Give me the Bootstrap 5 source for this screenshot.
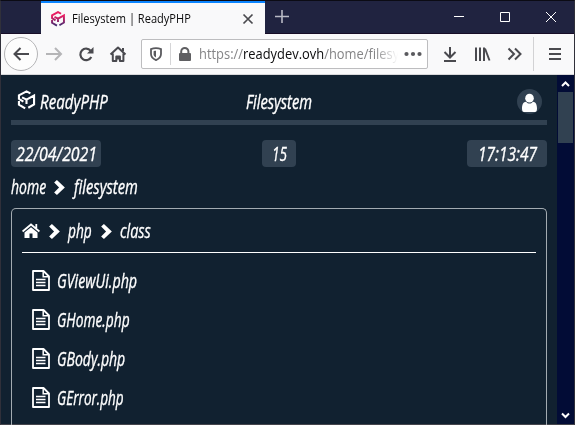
<!DOCTYPE html>
<html lang="en">
<head>
<meta charset="utf-8">
<meta name="viewport" content="width=device-width, initial-scale=1">
<title>Filesystem | ReadyPHP</title>
<link href="https://cdn.jsdelivr.net/npm/bootstrap@5.3.0/dist/css/bootstrap.min.css" rel="stylesheet">
<style>
html,body{height:100%;overflow:hidden}
body{background:#112130;font-family:"Open Sans","Noto Sans",sans-serif}
svg{display:block;flex:none}
.window{width:575px;height:425px;border:1px solid #30303a;border-top-color:#0b0b14;border-bottom-color:#45454c}
.titlebar{height:33px;background:#202340;border-bottom:1px solid #170d27}
.tab{width:224px;height:33px;margin-left:40px;background:#f9f9fa;border-top:2px solid #0a84ff;padding:0 11px 0 10px;color:#0c0c0d;font-size:12px}
.tab-icon{margin-top:1px}
.tab-title{margin-left:7px}
.toolbar{height:41px;background:#f9f9fa;border-bottom:1px solid #d8d8da;color:#4a4a4f}
.back{width:34px;height:34px;border:1px solid #b5b5b7;background:#fdfdfd;margin-left:3px}
.urlbar{width:287px;height:30px;margin-left:13px;border:1px solid #bdbdbf;border-radius:2px;background:#fff;font-size:14px}
.address{width:201px;margin-left:7px;line-height:28px;color:#858587;-webkit-mask-image:linear-gradient(90deg,#000 176px,transparent 199px);mask-image:linear-gradient(90deg,#000 176px,transparent 199px)}
.address b{font-weight:400;color:#0c0c0d}
.page{height:349px;color:#fff}
.content{width:556px;padding:0 10px;background:#112130}
.hand{font-size:20px;font-style:italic;font-weight:500;line-height:28px;height:28px;display:block;white-space:nowrap;flex:none;-webkit-text-stroke:.35px #fff}
.hand>span{display:inline-block}
.site-head{height:50px;padding:13px 5px 0 6px;border-bottom:5px solid #314151}
.site-head>*{height:28px}
.head-title{margin-right:68px}
.avatar{width:25px;height:25px;background:#314151;margin-top:1px}
.logo{margin:2px 4px 0 0}
.pills{margin-top:15px}
.pill{height:27px;background:#314151;border-radius:4px}
.pill .hand{height:27px;line-height:28px}
.pill-date{width:90px}.pill-count{width:34px;margin-right:10px}.pill-time{width:80px}
.crumbs{height:28px;margin-top:6px}
.crumb-sep{margin:0 9px 0 8px}
.panel{height:217px;margin-top:7px;border:1px solid #a3abb1;border-bottom:0;border-radius:5px 5px 0 0;padding:0 10px}
.panel-head{height:44px;padding-top:8px;padding-bottom:7px;border-bottom:1px solid #fff}
.chev-a{margin:0 8px 0 9px}
.files{padding:8px 0 0 10px}
.file{height:39px}
.file-name{margin-left:7px}
.scroll{width:17px;background:#020c36}
.thumb{width:15px;height:51px;background:#314151}
.arrow{height:17px}
</style>
<script src="https://cdn.jsdelivr.net/npm/bootstrap@5.3.0/dist/js/bootstrap.bundle.min.js"></script>
</head>
<body>
<svg width="0" height="0" class="position-absolute">
<defs>
<symbol id="cube" viewBox="0 0 16 18"><path d="M1.200 8.600V4.800L8 1.200l3.500 1.900M14.800 8.300V5L8 8.700 4 6.600M8 8.700v3.800M1.200 10v3.200L6.800 16.500M1.200 8l4 2.500M14.800 8v5L9.600 16" fill="none" stroke="currentColor" stroke-width="1.900"/></symbol>
<symbol id="chev" viewBox="0 0 10 14"><path d="M0 2.400 2.600 0 10 7 2.600 14 0 11.600 4.600 7z" fill="currentColor"/></symbol>
<symbol id="doc" viewBox="0 0 18 21"><path d="M1 1h10.500L17 6.500V20H1z" fill="none" stroke="currentColor" stroke-width="1.800" stroke-linejoin="round"/><path d="M11.200 1v5.800H17M4 9.500h9.500M4 12.500h9.500M4 15.500h9.500" fill="none" stroke="currentColor" stroke-width="1.500"/></symbol>
</defs>
</svg>
<div class="window d-flex flex-column">
  <div class="titlebar d-flex flex-shrink-0">
    <div class="tab d-flex align-items-center flex-shrink-0">
      <svg class="tab-icon" width="14" height="16" viewBox="0 0 16 18" preserveAspectRatio="none"><defs><linearGradient id="g" x1="0" y1="0" x2="0" y2="18" gradientUnits="userSpaceOnUse"><stop offset=".3" stop-color="#e91e63"/><stop offset="1" stop-color="#2b2f74"/></linearGradient></defs><path d="M1.200 8.600V4.800L8 1.200l3.500 1.900M14.800 8.300V5L8 8.700 4 6.600M8 8.700v3.800M1.200 10v3.200L6.800 16.500M1.200 8l4 2.500M14.800 8v5L9.600 16" fill="none" stroke="url(#g)" stroke-width="2.200"/></svg>
      <span class="tab-title d-block text-nowrap" data-w="119"><span class="d-inline-block">Filesystem | ReadyPHP</span></span>
      <svg class="ms-auto" width="12" height="12" viewBox="0 0 12 12"><path d="m1.500 1.500 9 9m0-9-9 9" stroke="#4a4a4f" stroke-width="1.700"/></svg>
    </div>
    <svg width="309" height="32" viewBox="265 1 309 32"><path d="M275 16.500h14M282 10v13" stroke="#b9bac5" stroke-width="1.600"/><path d="M454 16.500h10M500.500 12.500h9v9h-9zM546 12l10 10M556 12l-10 10" fill="none" stroke="#fff" stroke-width="1"/></svg>
  </div>
  <div class="toolbar d-flex align-items-center flex-shrink-0">
    <div class="back rounded-circle d-flex align-items-center justify-content-center"><svg width="16" height="14" viewBox="0 0 16 14"><path d="M16 7H1.500M7.500 1l-6 6 6 6" fill="none" stroke="currentColor" stroke-width="2"/></svg></div>
    <svg width="90" height="40" viewBox="38 34 90 40"><path d="M46 54h14.500M55 48l6 6-6 6" fill="none" stroke="#b5b5b7" stroke-width="2"/><path d="M90.600 50.600A5.800 5.800 0 1 0 91.300 57" fill="none" stroke="currentColor" stroke-width="2.200"/><path d="M93.500 47v6.500H87z" fill="currentColor"/><path d="m110.500 54.500 7.500-7 7.500 7M112.800 53.500v7.500h3.500v-4.500h3.600v4.500h3.500v-7.500M123 51v-3" fill="none" stroke="currentColor" stroke-width="2" stroke-linejoin="round"/><path d="M117 56.500h2.500v3H117z" fill="currentColor"/></svg>
    <div class="urlbar d-flex align-items-center">
      <svg width="50" height="28" viewBox="142 40 50 28"><path d="M156 48.200c2 0 3.500.3 5 .9v5c0 3-2.200 4.900-5 6-2.800-1.100-5-3-5-6v-5c1.500-.6 3-.9 5-.9z" fill="none" stroke="#5a5a5e" stroke-width="1.800"/><path d="M156 50.800c-1 0-1.700.1-2.400.4v3c0 1.500 1 2.500 2.400 3.200z" fill="#5a5a5e"/><path d="M170.500 43v22" stroke="#d5d5d7"/><path d="M181.200 54v-2.500a3.600 3.600 0 0 1 7.200 0V54" fill="none" stroke="#5f5f62" stroke-width="2"/><rect x="179" y="53" width="12" height="8" rx="1" fill="#5f5f62"/></svg>
      <div class="address text-nowrap"><span class="d-block" data-w="200"><span class="d-inline-block">https://<b>readydev.ovh</b>/home/filesy</span></span></div>
      <svg class="ms-1" width="18" height="6" viewBox="0 0 18 6"><g fill="#5a5a5e"><circle cx="2.500" cy="3" r="2.100"/><circle cx="9" cy="3" r="2.100"/><circle cx="15.500" cy="3" r="2.100"/></g></svg>
    </div>
    <svg width="146" height="40" viewBox="428 34 146 40"><path d="M450 47v10M444.500 52l5.500 5.500 5.500-5.500M444 61h12" fill="none" stroke="currentColor" stroke-width="2"/><path d="M476 47.500V61M480 47.500V61M484 47.500V61" stroke="currentColor" stroke-width="2"/><path d="m485 48.500 4.500 12" stroke="currentColor" stroke-width="1.900"/><path d="m508.500 48.500 5.500 5.500-5.500 5.500M515 48.500l5.500 5.500-5.500 5.500" fill="none" stroke="currentColor" stroke-width="2"/><path d="M533.500 37v34" stroke="#d2d2d4"/><path d="M549 49h12M549 54h12M549 59h12" stroke="currentColor" stroke-width="2"/></svg>
  </div>
  <main class="page d-flex">
    <section class="content">
      <header class="site-head d-flex justify-content-between">
        <div class="d-flex"><svg class="logo" width="19" height="20"><use href="#cube"/></svg><span class="hand" data-w="68"><span>ReadyPHP</span></span></div>
        <span class="hand head-title" data-w="66"><span>Filesystem</span></span>
        <div class="avatar rounded-circle"><svg width="25" height="25" viewBox="0 0 25 25"><path d="M5 19.500c0-4.500 1.500-6.500 4-6.800 2.300 2.500 4.700 2.500 7 0 2.500.3 4 2.300 4 6.800 0 2.500-.7 3.500-2 3.500H7c-1.300 0-2-1-2-3.500z" fill="#fff"/><ellipse cx="12.500" cy="9.200" rx="4.300" ry="4.400" fill="#fff"/></svg></div>
      </header>
      <div class="pills d-flex justify-content-between">
        <div class="pill pill-date d-flex justify-content-center"><span class="hand" data-w="81"><span>22/04/2021</span></span></div>
        <div class="pill pill-count d-flex justify-content-center"><span class="hand" data-w="15"><span>15</span></span></div>
        <div class="pill pill-time d-flex justify-content-center"><span class="hand" data-w="59"><span>17:13:47</span></span></div>
      </div>
      <nav class="crumbs d-flex align-items-center">
        <span class="hand" data-w="35"><span>home</span></span>
        <svg class="crumb-sep" width="11" height="15"><use href="#chev"/></svg>
        <span class="hand" data-w="64"><span>filesystem</span></span>
      </nav>
      <div class="panel">
        <nav class="panel-head d-flex align-items-center">
          <svg width="18" height="16" viewBox="0 0 18 16"><path d="M9 4.200 15.500 9.500V15h-5v-4.500h-3V15h-5V9.500z" fill="#fff"/><path d="M.6 8.500 9 1.500l8.400 7M14.300 1v4" fill="none" stroke="#fff" stroke-width="1.800"/></svg>
          <svg class="chev-a" width="11" height="15"><use href="#chev"/></svg>
          <span class="hand" data-w="24"><span>php</span></span>
          <svg class="chev-a" width="11" height="15"><use href="#chev"/></svg>
          <span class="hand" data-w="31"><span>class</span></span>
        </nav>
        <div class="files">
          <div class="file d-flex align-items-center"><svg width="18" height="21"><use href="#doc"/></svg><span class="hand file-name" data-w="80"><span>GViewUi.php</span></span></div>
          <div class="file d-flex align-items-center"><svg width="18" height="21"><use href="#doc"/></svg><span class="hand file-name" data-w="73"><span>GHome.php</span></span></div>
          <div class="file d-flex align-items-center"><svg width="18" height="21"><use href="#doc"/></svg><span class="hand file-name" data-w="68"><span>GBody.php</span></span></div>
          <div class="file d-flex align-items-center"><svg width="18" height="21"><use href="#doc"/></svg><span class="hand file-name" data-w="67"><span>GError.php</span></span></div>
        </div>
      </div>
    </section>
    <aside class="scroll d-flex flex-column align-items-center">
      <svg class="arrow" width="9" height="17" viewBox="0 0 9 17"><path d="m1 11 3.500-3.500L8 11" fill="none" stroke="#fff" stroke-width="2"/></svg>
      <div class="thumb"></div>
      <svg class="arrow mt-auto" width="9" height="17" viewBox="0 0 9 17"><path d="m1 6.500 3.500 3.500L8 6.500" fill="none" stroke="#fff" stroke-width="2"/></svg>
    </aside>
  </main>
</div>
<script>
document.querySelectorAll('[data-w]').forEach(function (el) {
  var t = el.firstElementChild, w = +el.dataset.w;
  el.style.width = w + 'px';
  t.style.transformOrigin = '0 50%';
  t.style.transform = 'scaleX(' + w / t.offsetWidth + ')';
});
</script>
</body>
</html>
